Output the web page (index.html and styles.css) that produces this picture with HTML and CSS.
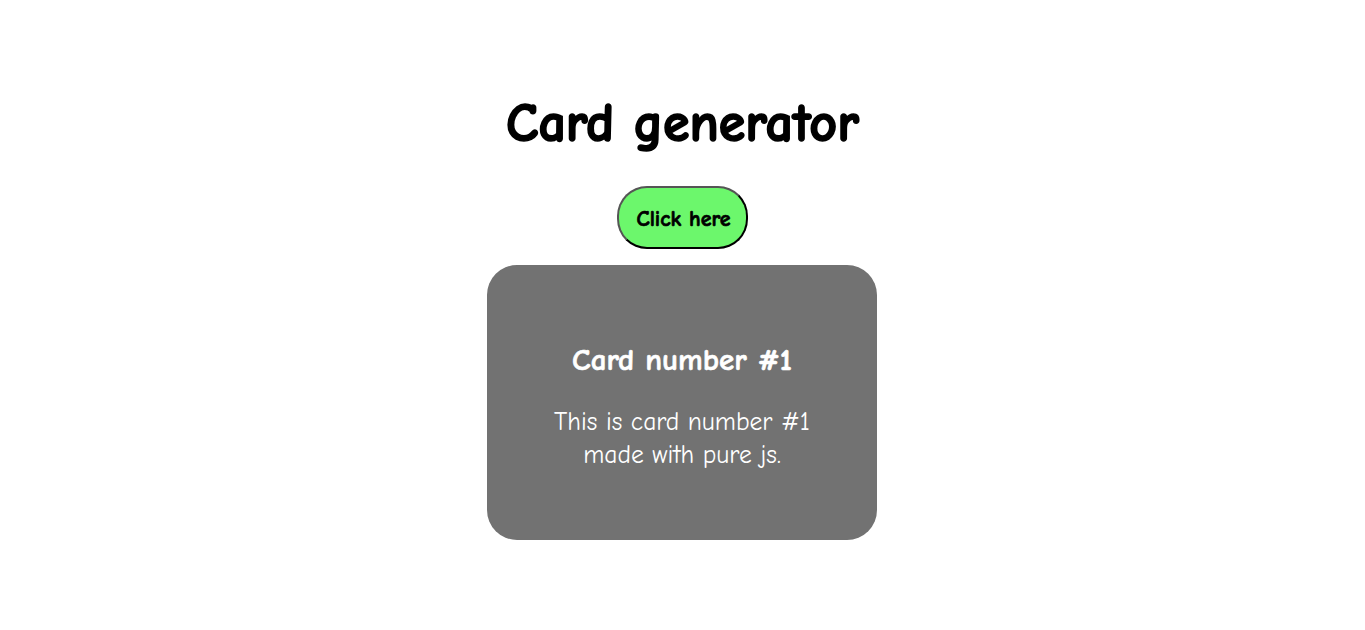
FILE: index.html
```html
<!DOCTYPE html>
<html lang="en">
<head>
<meta charset="utf-8">
<title>Card generator</title>
<link rel="stylesheet" href="styles.css">
</head>
<body>
<main class="page">
  <h1 class="title">Card generator</h1>
  <button class="btn" type="button">Click here</button>
  <div class="cards">
    <div class="card">
      <h2 class="card-title">Card number #1</h2>
      <p class="card-text">This is card number #1<br>made with pure js.</p>
    </div>
  </div>
</main>
</body>
</html>
```
FILE: styles.css
```css
html, body {
  margin: 0;
  padding: 0;
  background: #ffffff;
}
body {
  font-family: "Comic Sans MS", "Comic Neue", "Open Sans", "DejaVu Sans", sans-serif;
}
.page {
  display: flex;
  flex-direction: column;
  align-items: center;
  padding-top: 92px;
}
.title {
  margin: 0;
  font-size: 54px;
  line-height: 64px;
  font-weight: 700;
  color: #000;
  -webkit-text-stroke: 1.6px #000;
}
.btn {
  margin-top: 30px;
  width: 131px;
  height: 63px;
  background: #6cf76c;
  border: 2px solid #000;
  border-color: #555 #000 #000 #555;
  border-radius: 30px;
  font-family: inherit;
  font-size: 22px;
  font-weight: 700;
  color: #000;
  padding: 3px 0 0 2px;
  -webkit-text-stroke: 0.7px #000;
}
.cards {
  margin-top: 16px;
  margin-left: -1px;
  display: flex;
  justify-content: center;
}
.card {
  width: 390px;
  height: 275px;
  box-sizing: border-box;
  padding-top: 6px;
  background: #727272;
  border-radius: 30px;
  color: #fff;
  display: flex;
  flex-direction: column;
  align-items: center;
  justify-content: center;
  text-align: center;
}
.card-title {
  margin: 0;
  font-size: 31px;
  font-weight: 700;
  line-height: 40px;
  -webkit-text-stroke: 0.6px #fff;
}
.card-text {
  margin: 25px 0 0;
  font-size: 25.5px;
  line-height: 33px;
}
```
